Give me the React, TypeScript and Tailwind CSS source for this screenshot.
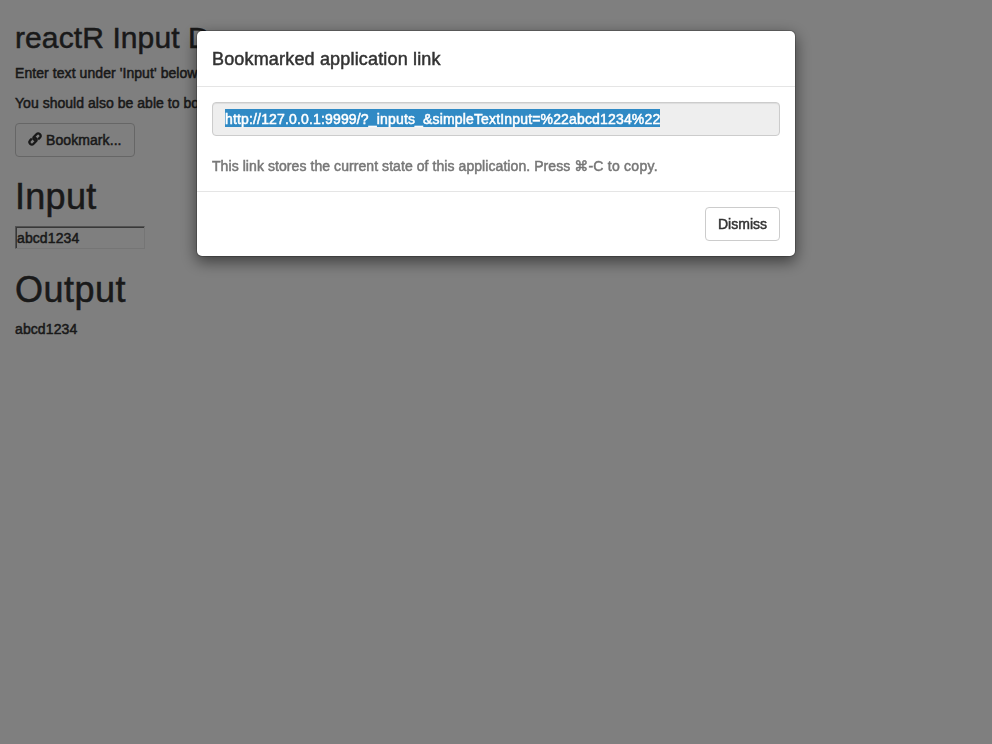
import React from "react";

function LinkIcon() {
  return (
    <svg className="mr-[4px] -mt-[2px] h-[14px] w-[14px] shrink-0" viewBox="0 0 14 14" fill="none" stroke="currentColor" strokeWidth="2.3" strokeLinecap="butt" strokeLinejoin="round">
      <path d="M8 8.2C6.4 8.6 4.8 6.9 5.5 5.4L8.4 2.3C9.4 1.2 10.8 1.2 11.8 2.1C12.8 3.1 12.9 4.5 11.9 5.6L10.1 7.4" />
      <path d="M6 5.8C7.6 5.4 9.2 7.1 8.5 8.6L5.6 11.7C4.6 12.8 3.2 12.8 2.2 11.9C1.2 10.9 1.1 9.5 2.1 8.4L3.9 6.6" />
    </svg>
  );
}

function Button({ children }: { children: React.ReactNode }) {
  return (
    <button className="inline-flex h-[34px] items-center rounded-[4px] border border-[#ccc] bg-white px-3 text-sm whitespace-nowrap text-[#333]">
      {children}
    </button>
  );
}

export default function App() {
  return (
    <div className="h-[744px] w-full overflow-hidden bg-white font-['Liberation_Sans',Arial,sans-serif] text-[14px] leading-[20px] text-[#333] [-webkit-text-stroke:0.5px_currentColor]">
      <main className="flex flex-col items-start px-[15px] pt-[21px]">
        <h2 className="mb-[9px] text-[30px] leading-[33px] tracking-[0.1px] whitespace-nowrap">reactR Input Demo</h2>
        <p className="mb-[10px] tracking-[0.07px]">Enter text under 'Input' below.</p>
        <p className="mb-[10px] tracking-[0.03px]">You should also be able to bookmark.</p>
        <div className="tracking-[0.08px]">
          <Button>
            <LinkIcon />
            Bookmark...
          </Button>
        </div>
        <h1 className="mt-[20px] mb-[9px] text-[36px] leading-[40px] tracking-[0.3px]">Input</h1>
        <input
          className="h-[23px] w-[130px] border border-t-[#a4a4a4] border-r-[#eaeaea] border-b-[#eaeaea] border-l-[#a4a4a4] bg-white p-0 pl-px tracking-[0.1px] shadow-[inset_1px_1px_0_#707070] outline-none"
          defaultValue="abcd1234"
        />
        <h1 className="mt-[21px] mb-[9px] text-[36px] leading-[40px] tracking-[0.5px]">Output</h1>
        <div className="tracking-[0.1px]">abcd1234</div>
      </main>

      <div className="fixed inset-0 flex items-start justify-center bg-black/50 pt-[30px]">
        <section className="h-[227px] w-[600px] rounded-[6px] border border-black/20 bg-white bg-clip-padding shadow-[0_5px_15px_rgba(0,0,0,0.5)]">
          <header className="h-[56px] border-b border-[#e5e5e5] px-[15px] pt-[15px]">
            <h4 className="text-[18px] leading-[26px] tracking-[0.17px]">Bookmarked application link</h4>
          </header>
          <div className="h-[104px] p-[15px]">
            <div className="flex h-[34px] items-start rounded-[4px] border border-[#ccc] bg-[#eee] px-3 pt-[6px] shadow-[inset_0_1px_1px_rgba(0,0,0,0.075)]">
              <span className="h-[18px] bg-[#308ac5] leading-[20px] tracking-[0.161px] text-white">
                http://127.0.0.1:9999/?_inputs_&amp;simpleTextInput=%22abcd1234%22
              </span>
            </div>
            <p className="mt-[20px] h-[20px] tracking-[0.07px] text-[#777]">
              This link stores the current state of this application. Press{" "}
              <span className="font-['DejaVu_Sans',sans-serif] text-[14px]">⌘</span>
              <span className="tracking-[0.25px]">-C to copy.</span>
            </p>
          </div>
          <footer className="flex justify-end border-t border-[#e5e5e5] p-[15px]">
            <Button>Dismiss</Button>
          </footer>
        </section>
      </div>
    </div>
  );
}
